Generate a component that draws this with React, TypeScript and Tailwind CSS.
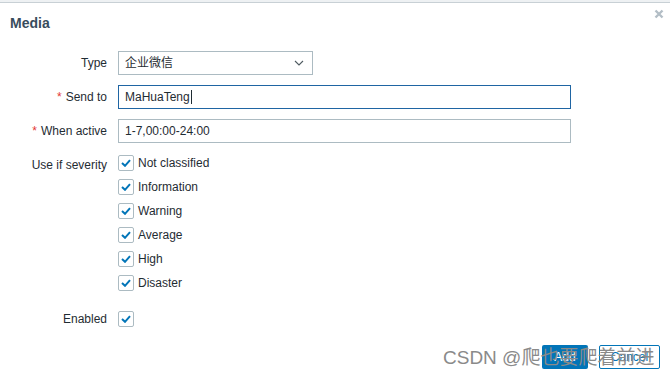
import React from 'react'

const severities = ['Not classified', 'Information', 'Warning', 'Average', 'High', 'Disaster']

function Check() {
  return (
    <span className="flex h-4 w-4 shrink-0 items-center justify-center rounded-[2px] border border-[#acbbc2] bg-white">
      <svg width="10" height="8" viewBox="0 0 10 8">
        <path d="M1 4 L4 6.8 L9 1.2" fill="none" stroke="#0275b8" strokeWidth="2" />
      </svg>
    </span>
  )
}

function Label({ text, required }: { text: string; required?: boolean }) {
  return (
    <div className="w-[118px] shrink-0 pr-[11px] text-right">
      {required && <span className="mr-[4px] text-[#e33734]">*</span>}
      {text}
    </div>
  )
}

export default function App() {
  return (
    <div
      className="relative h-[380px] w-[670px] overflow-hidden bg-white text-[12px] text-[#1f2c33]"
      style={{ fontFamily: '"Liberation Sans", Arial, "Noto Sans CJK SC", sans-serif' }}
    >
      <div className="h-[3px] border-b border-[#c8d0d5] bg-[#eef1f3]" />

      <div className="flex h-[38px] items-center justify-between pl-[10px] pr-[6px]">
        <div className="mt-[2px] text-[14px] font-bold text-[#384c5c]">Media</div>
        <svg width="10" height="10" viewBox="0 0 10 10" className="mb-[16px]">
          <path d="M1.5 1.5 L8.5 8.5 M8.5 1.5 L1.5 8.5" stroke="#b3bec6" strokeWidth="2.4" />
        </svg>
      </div>

      <div className="mt-[10px] flex flex-col">
        <div className="flex items-center">
          <Label text="Type" />
          <div className="flex h-[24px] w-[195px] items-center justify-between border border-[#acbbc2] pl-[6px] pr-[8px]">
            <span>企业微信</span>
            <svg width="10" height="6" viewBox="0 0 10 6">
              <path d="M1 1 L5 5 L9 1" fill="none" stroke="#4f5b61" strokeWidth="1.1" />
            </svg>
          </div>
        </div>

        <div className="mt-[10px] flex items-center">
          <Label text="Send to" required />
          <div className="flex h-[24px] w-[453px] items-center border border-[#1f65a3] pl-[6px]">
            <span>MaHuaTeng</span>
            <span className="ml-[1px] h-[14px] w-px bg-[#1f2c33]" />
          </div>
        </div>

        <div className="mt-[10px] flex items-center">
          <Label text="When active" required />
          <div className="flex h-[24px] w-[453px] items-center border border-[#acbbc2] pl-[6px]">
            1-7,00:00-24:00
          </div>
        </div>

        <div className="mt-[12px] flex">
          <div className="pt-[1px]">
            <Label text="Use if severity" />
          </div>
          <div className="flex flex-col gap-[8px]">
            {severities.map((s) => (
              <div key={s} className="flex h-[16px] items-center gap-[4px]">
                <Check />
                <span>{s}</span>
              </div>
            ))}
          </div>
        </div>

        <div className="mt-[19px] flex items-center">
          <Label text="Enabled" />
          <Check />
        </div>
      </div>

      <div className="mt-[17px] flex justify-end gap-[11px] pr-[10px]">
        <button className="h-[24px] w-[46px] rounded-[2px] bg-[#0275b8] text-white">Add</button>
        <button className="h-[24px] w-[61px] rounded-[2px] border border-[#0275b8] bg-white text-[#0275b8]">
          Cancel
        </button>
      </div>

      <div className="absolute left-[443px] top-[346px] text-[19px] leading-[24px] text-[#8a8a8a]">
        CSDN @爬也要爬着前进
      </div>
    </div>
  )
}
